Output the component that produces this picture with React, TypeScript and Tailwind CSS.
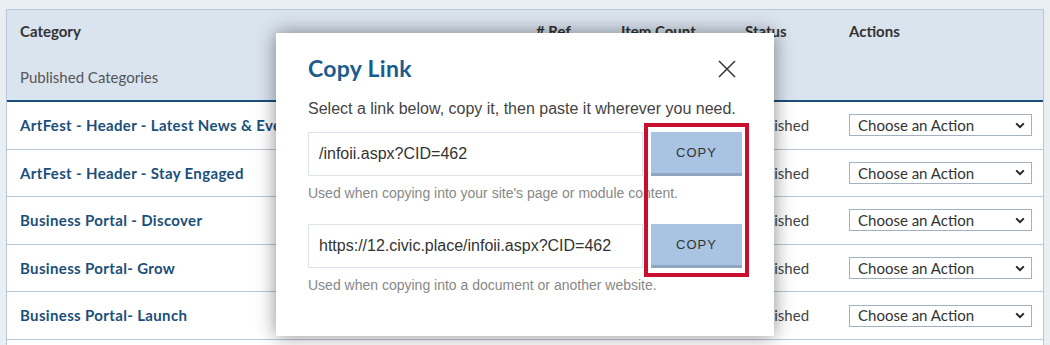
const rows = [
  'ArtFest - Header - Latest News & Events',
  'ArtFest - Header - Stay Engaged',
  'Business Portal - Discover',
  'Business Portal- Grow',
  'Business Portal- Launch',
];

const cols = 'grid grid-cols-[516px_85px_124px_104px_1fr]';

const ActionSelect = () => (
  <div className="flex h-[22px] w-[183px] items-center justify-between border border-[#a3b1c2] bg-white pl-2 pr-[6px] text-[15px] text-[#333]">
    <span>Choose an Action</span>
    <svg width="10" height="7" viewBox="0 0 10 7">
      <path d="M1.2 1.4 5 5.2 8.8 1.4" fill="none" stroke="#222" strokeWidth="2" />
    </svg>
  </div>
);

const LinkRow = ({ value, help }: { value: string; help: string }) => (
  <div>
    <div className="flex gap-2">
      <div className="flex h-[44px] w-[335px] items-center border border-[#dde3ea] px-[10px] text-[16px] text-[#333]">
        {value}
      </div>
      <button className="h-[44px] w-[91px] border-b-[3px] border-[#8ea6c0] bg-[#a8c4e2] text-[13px] tracking-[1px] text-[#333]">
        COPY
      </button>
    </div>
    <p className="mt-[8px] text-[14px] leading-[18px] text-[#888]">{help}</p>
  </div>
);

export default function App() {
  return (
    <div className="relative h-[345px] w-[1050px] overflow-hidden bg-[#e9eef3] pl-[6px] pt-[9px] font-['Lato',sans-serif]">
      <div className="h-[350px] w-[1038px] border border-[#b8c8d8] bg-white">
        {/* header */}
        <div className={`${cols} h-[92px] border-b-2 border-[#1b4f7a] bg-[#dae4ef] text-[15px] text-[#333]`}>
          <div className="pl-[13px] pt-[10px]">
            <div className="font-bold">Category</div>
            <div className="mt-[23px] text-[#555]">Published Categories</div>
          </div>
          <div className="pl-[13px] pt-[10px] font-bold"># Ref</div>
          <div className="pl-[13px] pt-[10px] font-bold">Item Count</div>
          <div className="pl-[13px] pt-[10px] font-bold">Status</div>
          <div className="pl-[13px] pt-[10px] font-bold">Actions</div>
        </div>
        {/* rows */}
        {rows.map((name, i) => (
          <div
            key={i}
            className={`${cols} h-[47.6px] items-center border-b border-[#b8c6d6] text-[15px]`}
          >
            <div className="pl-[13px] font-bold tracking-[0.35px] text-[#1b4f7a]">{name}</div>
            <div />
            <div />
            <div className="pl-[13px] text-[#444]">Published</div>
            <div className="pl-[13px]">
              <ActionSelect />
            </div>
          </div>
        ))}
      </div>

      {/* modal */}
      <div className="absolute left-[276px] top-[33px] h-[303px] w-[498px] bg-white px-[32px] pt-[20px] font-['Liberation_Sans',Arial,sans-serif] shadow-[0_0_18px_rgba(0,0,0,0.45)]">
        <div className="flex items-center justify-between">
          <h2 className="font-['Lato',sans-serif] text-[23px] font-bold leading-[30px] tracking-[0.3px] text-[#1b5c8f]">
            Copy Link
          </h2>
          <svg width="18" height="18" viewBox="0 0 18 18" className="mr-[6px] mt-[2px]">
            <path d="M1 1 17 17M17 1 1 17" stroke="#333" strokeWidth="1.5" />
          </svg>
        </div>
        <p className="mt-[16px] text-[16px] leading-[20px] text-[#444]">
          Select a link below, copy it, then paste it wherever you need.
        </p>
        <div className="mt-[13px]">
          <LinkRow value="/infoii.aspx?CID=462" help="Used when copying into your site's page or module content." />
        </div>
        <div className="mt-[22px]">
          <LinkRow value="https://12.civic.place/infoii.aspx?CID=462" help="Used when copying into a document or another website." />
        </div>
        {/* highlight */}
        <div className="absolute left-[368px] top-[90px] h-[154px] w-[105px] border-[4px] border-[#c8102e]" />
      </div>
    </div>
  );
}
